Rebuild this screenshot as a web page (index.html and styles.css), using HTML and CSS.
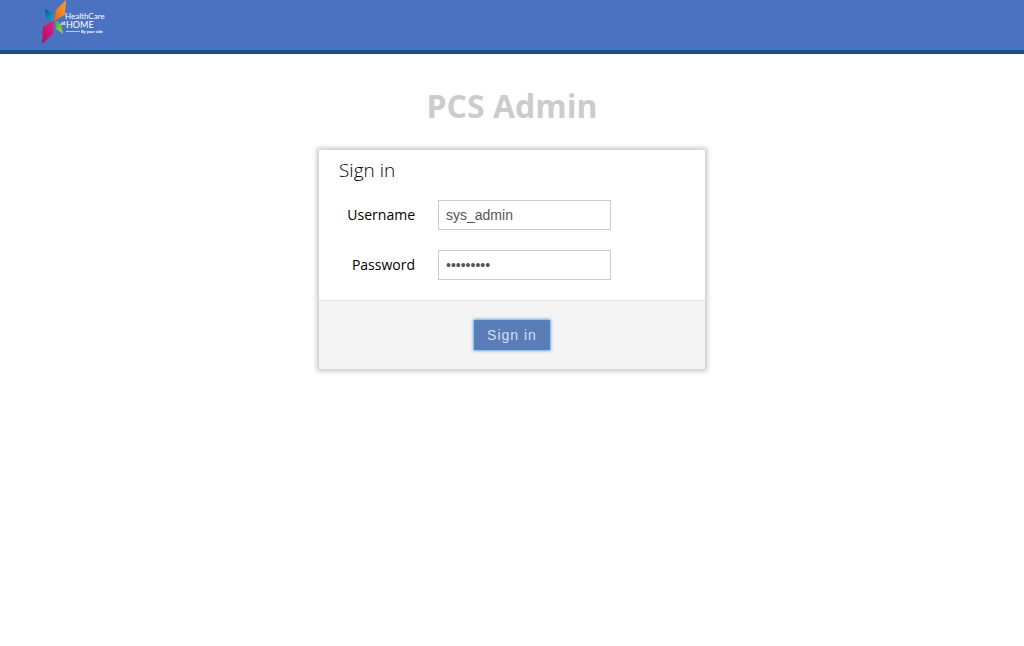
FILE: index.html
```html
<!DOCTYPE html>
<html lang="en">
<head>
<meta charset="utf-8">
<title>PCS Admin</title>
<link rel="stylesheet" href="styles.css">
</head>
<body>
<header class="topbar">
  <svg class="logo" width="64" height="46" viewBox="0 0 64 46" role="img" aria-label="HealthCare at Home, by your side">
    <defs>
      <linearGradient id="orange" x1="1" y1="0" x2="0" y2="1"><stop offset="0" stop-color="#fba52a"/><stop offset="1" stop-color="#e8601f"/></linearGradient>
      <linearGradient id="pink" x1="1" y1="0" x2="0" y2="1"><stop offset="0" stop-color="#ee1c8e"/><stop offset="1" stop-color="#a80f5c"/></linearGradient>
      <linearGradient id="teal" x1="0" y1="0" x2="1" y2="1"><stop offset="0" stop-color="#0a4f9a"/><stop offset="1" stop-color="#1cb5c0"/></linearGradient>
      <linearGradient id="green" x1="0" y1="0" x2="1" y2="1"><stop offset="0" stop-color="#3fa648"/><stop offset="1" stop-color="#b5d334"/></linearGradient>
    </defs>
    <path fill="url(#orange)" d="M26 0 L16 10 L14 21 L25 15 Z"/>
    <path fill="url(#teal)" d="M5 9 L13 13 L14 22 L6 18 Z"/>
    <path fill="url(#green)" d="M15 20 L21 24 L23 34 L16 29 Z"/>
    <path fill="url(#pink)" d="M14 20 L3 27 L2 44 L13 34 Z"/>
    <text class="logo-name" x="25" y="19">HealthCare</text>
    <text class="logo-at" x="21" y="25">at</text>
    <text class="logo-home" x="26" y="28">HOME</text>
    <path stroke="#b9c8e8" d="M26 31.500 H40"/>
    <text class="logo-side" x="41" y="33">By your side</text>
  </svg>
</header>
<main class="content">
  <h1 class="title">PCS Admin</h1>
  <form class="card">
    <div class="fields">
      <h2 class="heading">Sign in</h2>
      <div class="row">
        <label class="label" for="username">Username</label>
        <input class="input" id="username" type="text" value="sys_admin">
      </div>
      <div class="row">
        <label class="label" for="password">Password</label>
        <input class="input" id="password" type="password" value="password1">
      </div>
    </div>
    <div class="actions">
      <button class="submit" type="button">Sign in</button>
    </div>
  </form>
</main>
</body>
</html>
```
FILE: styles.css
```css
* { box-sizing: border-box; }
body {
  margin: 0;
  background: #fff;
  color: #000;
  font: 14px/20px "Open Sans", sans-serif;
}
.topbar {
  display: flex;
  height: 54px;
  padding-left: 40px;
  background: #4a72c1;
  border-bottom: 4px solid #1d4b8f;
}
.logo { display: block; overflow: visible; }
.logo text { fill: #fff; }
.logo-name { font: 8px "Lato", sans-serif; }
.logo-at { font: bold 5px "Lato", sans-serif; }
.logo-home { font: 9px "Lato", sans-serif; }
.logo-side { font: bold 4px "Lato", sans-serif; }
.content {
  display: flex;
  flex-direction: column;
  align-items: center;
  padding: 32px 16px;
}
.title {
  margin: 0 0 24px;
  color: #ccc;
  font-size: 32px;
  line-height: 40px;
}
.card {
  width: 100%;
  max-width: 386px;
  background: #fff;
  box-shadow: 0 0 5px 2px #c4c4c4;
}
.fields {
  display: flex;
  flex-direction: column;
  gap: 20px;
  padding: 10px 20px 20px;
}
.heading {
  margin: 0;
  color: #000;
  font-size: 19px;
  font-weight: 300;
  line-height: 20px;
}
.row {
  display: flex;
  align-items: center;
  gap: 23px;
}
.label { width: 76px; text-align: right; }
.input {
  width: 173px;
  height: 30px;
  padding: 4px 7px;
  border: 1px solid #ccc;
  border-radius: 0;
  background: #fff;
  color: #555;
  font: 14px/20px "Liberation Sans", Arial, sans-serif;
}
.actions {
  display: flex;
  justify-content: center;
  padding: 19px 20px;
  background: #f4f4f4;
  border-top: 1px solid #e5e5e5;
}
.submit {
  height: 30px;
  padding: 0 13px;
  border: 0;
  border-radius: 1px;
  background: #5a7db8;
  box-shadow: 0 0 3px 1px #6fa8dc, inset 0 0 3px 1px #4d86c6;
  color: #d5dff0;
  font: 14px/20px "Liberation Sans", Arial, sans-serif;
  letter-spacing: 1px;
}
```
